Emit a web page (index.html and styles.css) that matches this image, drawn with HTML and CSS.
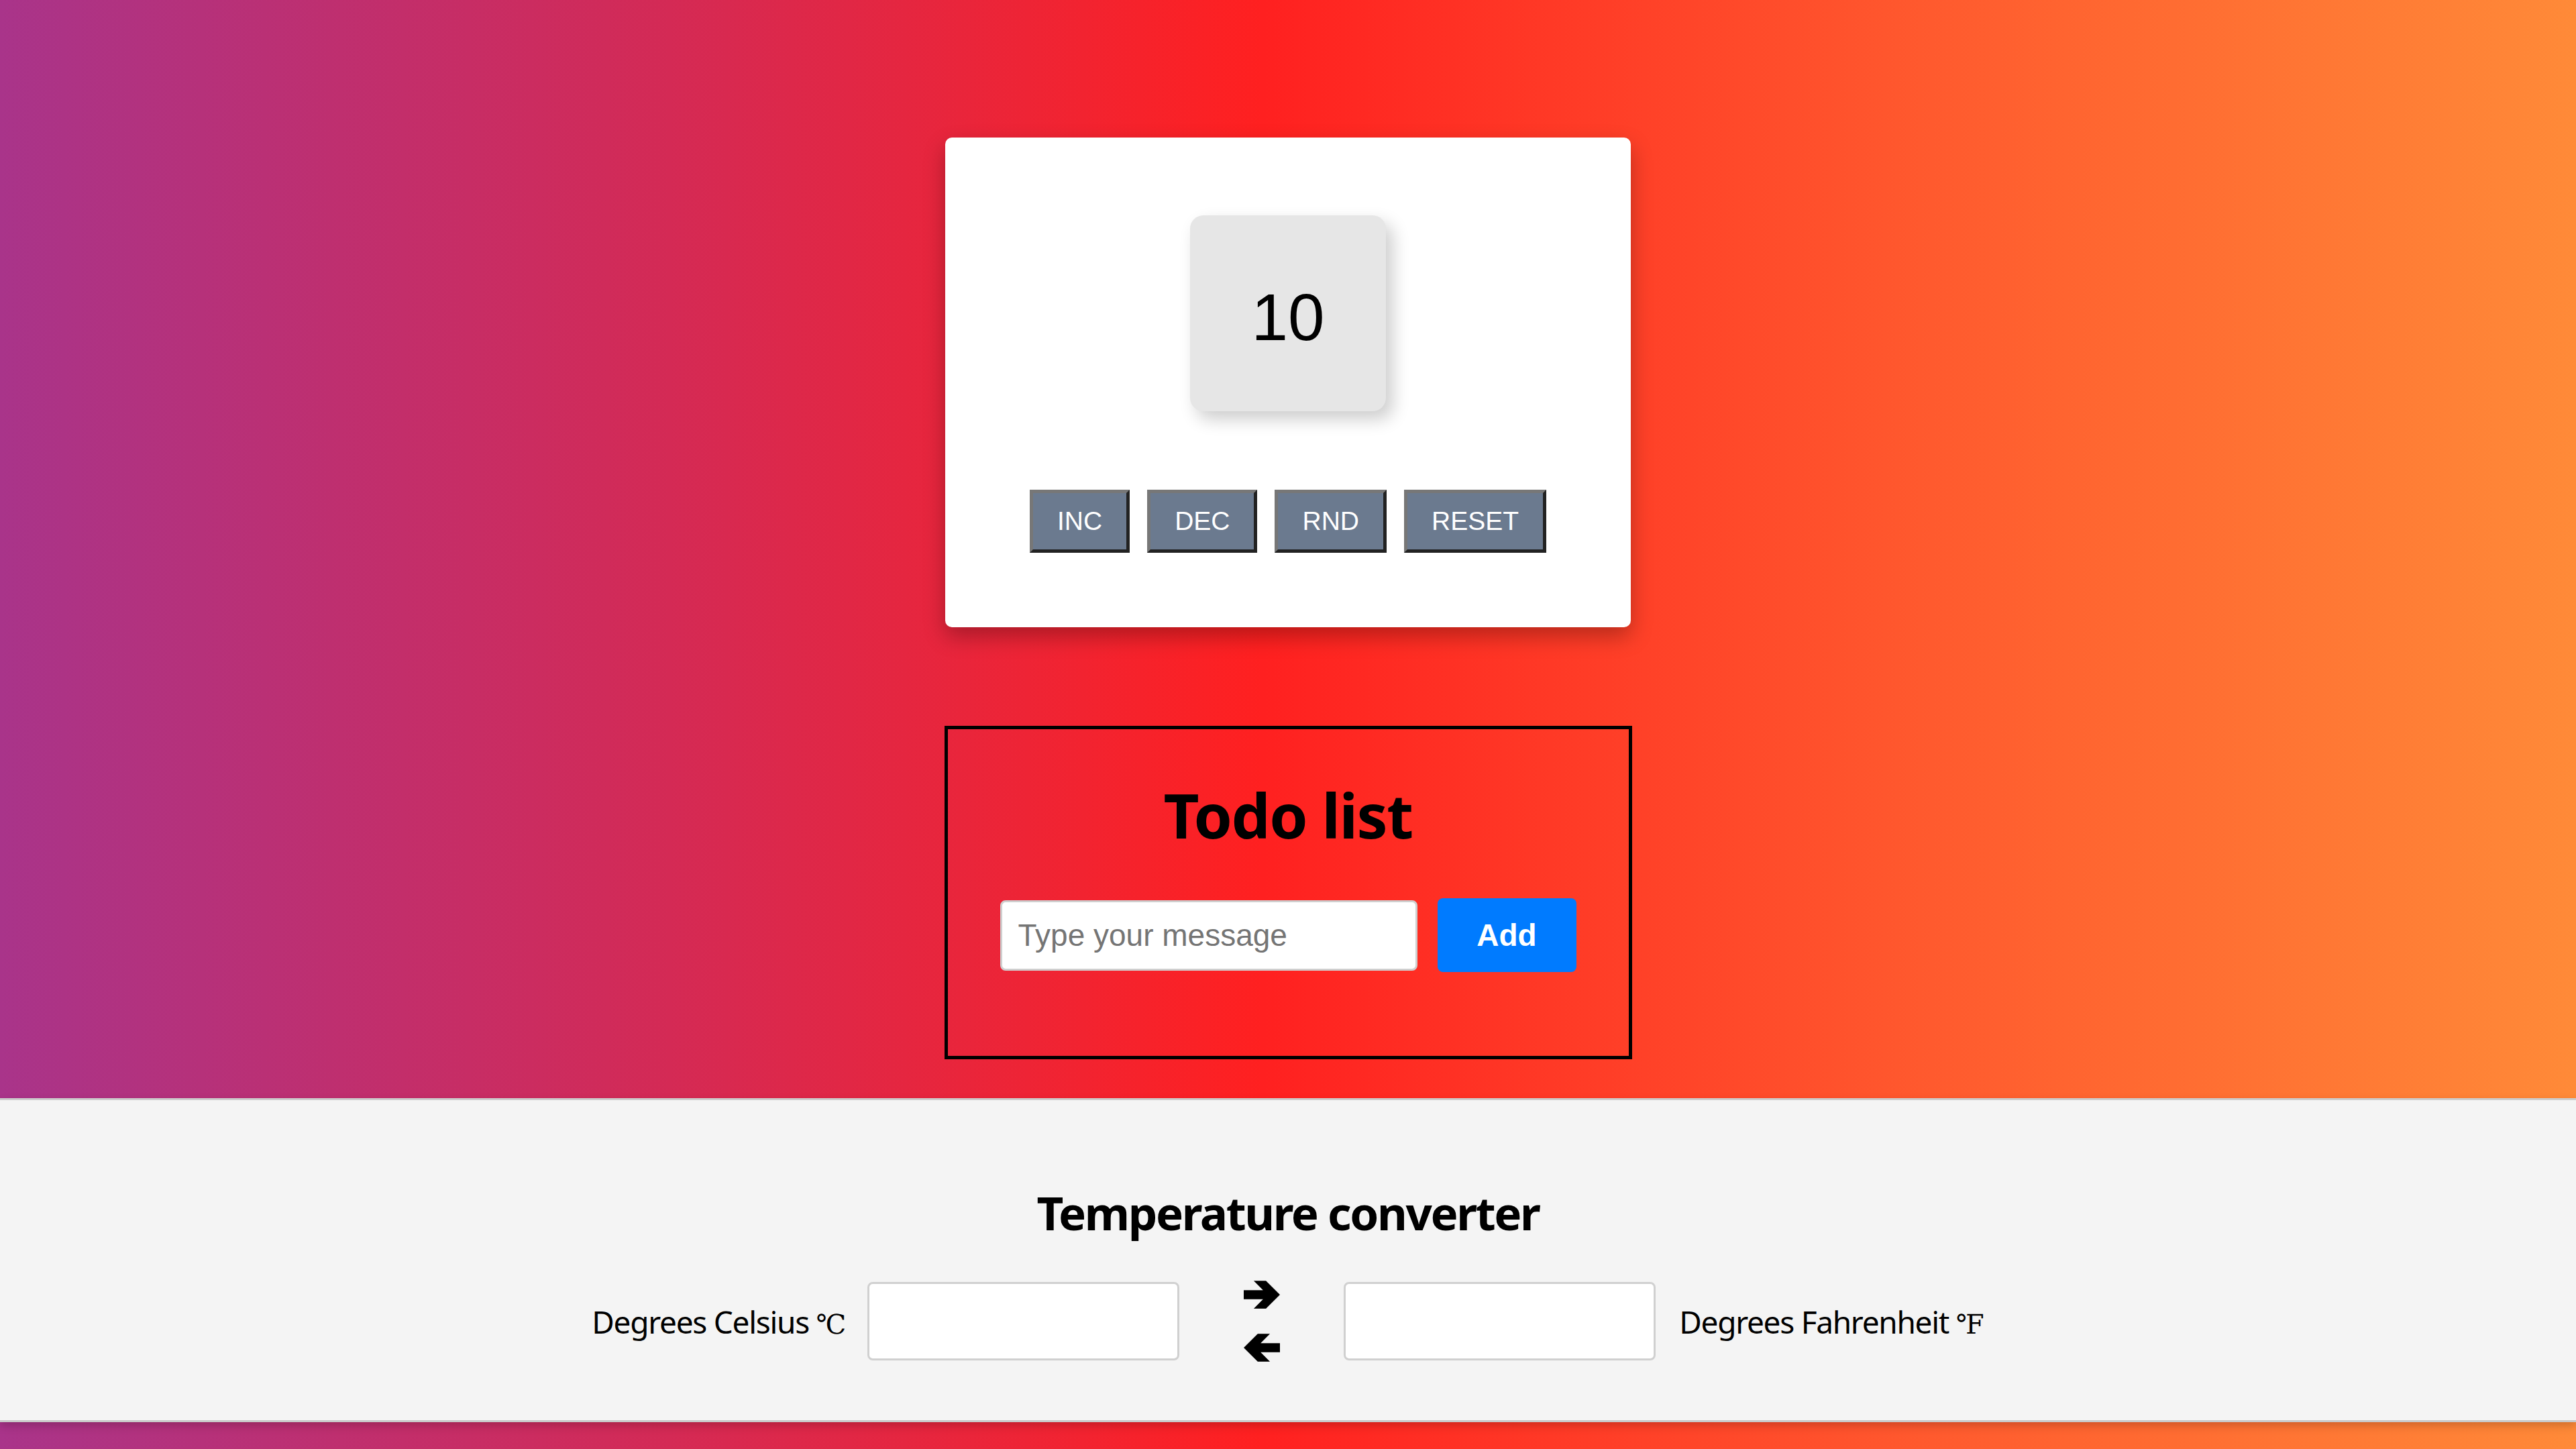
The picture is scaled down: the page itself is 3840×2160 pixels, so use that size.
FILE: index.html
```html
<!DOCTYPE html>
<html lang="en">
<head>
<meta charset="utf-8">
<title>Widgets</title>
<link rel="stylesheet" href="styles.css">
</head>
<body>
  <main class="page">
    <section class="card">
      <div class="counter">10</div>
      <div class="controls">
        <button class="ctrl">INC</button>
        <button class="ctrl">DEC</button>
        <button class="ctrl">RND</button>
        <button class="ctrl">RESET</button>
      </div>
    </section>

    <section class="todo">
      <h1 class="todo-title">Todo list</h1>
      <form class="todo-row">
        <input class="todo-input" type="text" placeholder="Type your message">
        <button class="todo-add" type="button">Add</button>
      </form>
    </section>
  </main>

  <section class="converter">
    <h2 class="conv-title">Temperature converter</h2>
    <div class="conv-row">
      <label class="conv-label conv-label-c">Degrees Celsius <span class="unit">℃</span></label>
      <input class="conv-input" type="text">
      <div class="arrows">
        <svg class="arrow" viewBox="0 0 163 125" width="54" height="42"><polygon points="0,42 87,42 45,0 100,0 163,62.5 100,125 45,125 87,83 0,83"/></svg>
        <svg class="arrow" viewBox="0 0 163 125" width="54" height="42"><polygon points="163,42 76,42 118,0 63,0 0,62.5 63,125 118,125 76,83 163,83"/></svg>
      </div>
      <input class="conv-input" type="text">
      <label class="conv-label conv-label-f">Degrees Fahrenheit <span class="unit">℉</span></label>
    </div>
  </section>
</body>
</html>
```
FILE: styles.css
```css
html, body {
  margin: 0;
  padding: 0;
}

body {
  min-height: 100vh;
  background: linear-gradient(to right, #a9348a 0%, #d42a55 26%, #ff2020 49%, #ff5a2e 75%, #ff8a38 100%);
  font-family: "Noto Sans", "Open Sans", sans-serif;
  color: #000;
}

.page {
  display: flex;
  flex-direction: column;
  align-items: center;
  padding-top: 205px;
  padding-bottom: 58px;
}

/* Counter card */
.card {
  box-sizing: border-box;
  width: 1022px;
  height: 730px;
  padding-top: 116px;
  background: #fff;
  border-radius: 10px;
  box-shadow: 0 14px 32px rgba(0, 0, 0, 0.28);
  display: flex;
  flex-direction: column;
  align-items: center;
}

.counter {
  box-sizing: border-box;
  width: 292px;
  height: 292px;
  padding-top: 12px;
  background: #e6e6e6;
  border-radius: 20px;
  box-shadow: 10px 12px 26px rgba(0, 0, 0, 0.2);
  display: flex;
  align-items: center;
  justify-content: center;
  font-family: "Liberation Sans", Arial, sans-serif;
  font-size: 98px;
  line-height: 1;
}

.controls {
  margin-top: 117px;
  display: flex;
  gap: 26px;
}

.ctrl {
  margin: 0;
  padding: 20px 36px;
  font-family: "Liberation Sans", Arial, sans-serif;
  font-size: 39px;
  line-height: 44px;
  color: #fff;
  background: #6b7a8f;
  border: 5px solid;
  border-color: #777777 #222222 #222222 #777777;
  border-radius: 0;
}

/* Todo */
.todo {
  box-sizing: border-box;
  width: 1025px;
  height: 497px;
  margin-top: 147px;
  border: 5px solid #000;
  padding: 82px 0 0;
  display: flex;
  flex-direction: column;
  align-items: center;
}

.todo-title {
  margin: 0;
  font-size: 92px;
  line-height: 92px;
  font-weight: 700;
  letter-spacing: -1.5px;
}

.todo-row {
  margin: 78px 0 0;
  display: flex;
  align-items: center;
  gap: 30px;
}

.todo-input {
  box-sizing: border-box;
  width: 622px;
  height: 105px;
  margin: 0;
  padding: 0 24px;
  border: 3px solid #cfcfcf;
  border-radius: 8px;
  background: #fff;
  font-family: "Liberation Sans", Arial, sans-serif;
  font-size: 46px;
  color: #222;
  outline: none;
}

.todo-input::placeholder {
  color: #757575;
}

.todo-add {
  box-sizing: border-box;
  width: 207px;
  height: 110px;
  margin: 0;
  padding: 0;
  border: none;
  border-radius: 8px;
  background: #007bff;
  color: #fff;
  font-family: "Liberation Sans", Arial, sans-serif;
  font-weight: 700;
  font-size: 46px;
}

/* Converter */
.converter {
  background: #f4f4f4;
  border-top: 3px solid #cdcdcd;
  border-bottom: 3px solid #c9c9c9;
  box-shadow: 0 6px 12px rgba(0, 0, 0, 0.18);
  padding: 132px 0 87px;
  display: flex;
  flex-direction: column;
  align-items: center;
}

.conv-title {
  margin: 0;
  font-size: 69px;
  line-height: 70px;
  font-weight: 700;
  letter-spacing: -2.4px;
}

.conv-row {
  margin-top: 67px;
  display: flex;
  align-items: center;
  justify-content: center;
}

.conv-label {
  font-size: 46px;
  white-space: nowrap;
  letter-spacing: -1.3px;
}

.conv-label-c {
  margin-right: 32px;
}

.conv-label-f {
  margin-left: 35px;
}

.unit {
  font-family: "DejaVu Serif", "Liberation Serif", serif;
  font-size: 40px;
  letter-spacing: 0;
}

.conv-input {
  box-sizing: border-box;
  width: 465px;
  height: 117px;
  margin: 0;
  border: 3px solid #d0d0d0;
  border-radius: 8px;
  background: #fff;
  font-size: 46px;
  outline: none;
}

.arrows {
  width: 245px;
  display: flex;
  flex-direction: column;
  align-items: center;
  gap: 37px;
}

.arrow {
  display: block;
  fill: #000;
}
```
